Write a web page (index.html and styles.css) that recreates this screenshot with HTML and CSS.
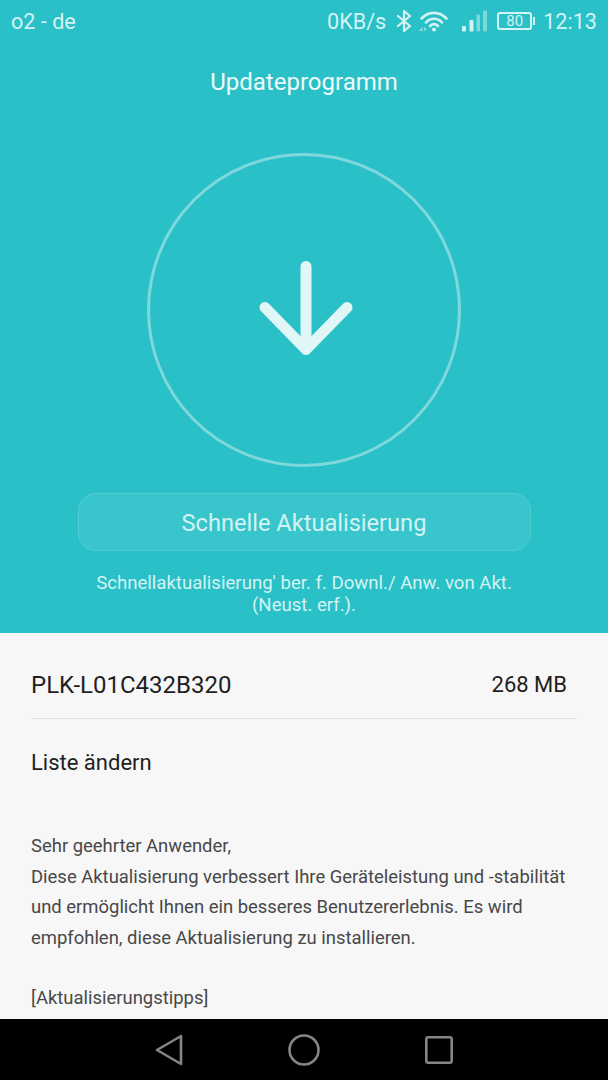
FILE: index.html
```html
<!DOCTYPE html>
<html lang="de">
<head>
    <meta charset="UTF-8">
    <meta name="viewport" content="width=device-width, initial-scale=1.0">
    <title>Updateprogramm</title>
    <link rel="stylesheet" href="styles.css">
</head>
<body>
    <div class="screen">
        <header class="hero">
            <div class="status-bar">
                <span class="carrier">o2 - de</span>
                <div class="status-right">
                    <span class="speed">0KB/s</span>
                    <svg class="icon-bt" width="16" height="22" viewBox="0 0 16 22">
                        <path d="M2 6 L14 16 L8 21 V1 L14 6 L2 16" fill="none" stroke="#d4f3f3" stroke-width="2.2" stroke-linejoin="round" stroke-linecap="round"/>
                    </svg>
                    <svg class="icon-wifi" width="30" height="22" viewBox="0 0 30 22">
                        <path d="M2.500 8.500 C9.500 1 20.500 1 27.500 8.500" fill="none" stroke="#d4f3f3" stroke-width="2.600" stroke-linecap="round"/>
                        <path d="M7 12.500 C11.500 7.500 18.500 7.500 23 12.500" fill="none" stroke="#d4f3f3" stroke-width="2.600" stroke-linecap="round"/>
                        <path d="M11 16 C13.500 13.600 16.500 13.600 19 16" fill="none" stroke="#d4f3f3" stroke-width="2.600" stroke-linecap="round"/>
                        <circle cx="15" cy="19.500" r="2" fill="#d4f3f3"/>
                        <path d="M3.500 17 V21 L0 21 Z" fill="#8fdcdd"/>
                        <path d="M5 17 V21 L8 19 Z" fill="#8fdcdd"/>
                    </svg>
                    <svg class="icon-signal" width="25" height="22" viewBox="0 0 25 22">
                        <rect x="0" y="16" width="4" height="5.500" rx="1" fill="#d4f3f3"/>
                        <rect x="7.500" y="10" width="4" height="11.500" rx="1" fill="#d4f3f3"/>
                        <rect x="14.500" y="4.500" width="3.500" height="17" rx="1" fill="#7fd7d9"/>
                        <rect x="21" y="0.500" width="4" height="21" rx="1" fill="#7fd7d9"/>
                    </svg>
                    <span class="battery"><span class="battery-level">80</span></span>
                    <span class="clock">12:13</span>
                </div>
            </div>
            <h1 class="title">Updateprogramm</h1>
            <div class="ring">
                <svg class="arrow" width="96" height="98" viewBox="0 0 96 98">
                    <path d="M48 5.500 V88.500 M7 46.500 L48 88.500 L89 46.500" fill="none" stroke="#e0f6f7" stroke-width="11" stroke-linecap="round" stroke-linejoin="round"/>
                </svg>
            </div>
            <button class="quick-btn">Schnelle Aktualisierung</button>
            <p class="hint">Schnellaktualisierung' ber. f. Downl./ Anw. von Akt.<br>(Neust. erf.).</p>
        </header>

        <main class="details">
            <div class="version-row">
                <span>PLK-L01C432B320</span>
                <span class="size">268 MB</span>
            </div>
            <h2 class="changes-title">Liste ändern</h2>
            <div class="changes-text">
                <p>Sehr geehrter Anwender,<br>Diese Aktualisierung verbessert Ihre Geräteleistung und -stabilität und ermöglicht Ihnen ein besseres Benutzererlebnis. Es wird empfohlen, diese Aktualisierung zu installieren.</p>
                <p>[Aktualisierungstipps]</p>
            </div>
        </main>

        <nav class="nav-bar">
            <svg width="30" height="32" viewBox="0 0 30 32">
                <path d="M27 2 V30 L3 16 Z" fill="none" stroke="#858585" stroke-width="2.600" stroke-linejoin="round"/>
            </svg>
            <svg width="32" height="32" viewBox="0 0 32 32">
                <circle cx="16" cy="16" r="14.500" fill="none" stroke="#858585" stroke-width="2.600"/>
            </svg>
            <svg width="30" height="30" viewBox="0 0 30 30">
                <rect x="2.300" y="2.300" width="25.400" height="25.400" rx="2" fill="none" stroke="#858585" stroke-width="2.600"/>
            </svg>
        </nav>
    </div>
</body>
</html>
```

FILE: styles.css
```css
* {
    box-sizing: border-box;
}

html, body {
    margin: 0;
    padding: 0;
}

body {
    font-family: Roboto, "Noto Sans", sans-serif;
    background-color: #000;
}

.screen {
    width: 608px;
    height: 1080px;
    display: flex;
    flex-direction: column;
    overflow: hidden;
}

/* Top teal part */
.hero {
    height: 633px;
    flex-shrink: 0;
    background-color: #29c0c7;
    display: flex;
    flex-direction: column;
    align-items: center;
    color: #d4f3f3;
}

.status-bar {
    width: 100%;
    height: 42px;
    padding: 0 11px;
    display: flex;
    align-items: center;
    justify-content: space-between;
    font-size: 21.6px;
}

.status-right {
    display: flex;
    align-items: center;
}

.icon-bt {
    margin-left: 10px;
}

.icon-wifi {
    margin-left: 7px;
}

.icon-signal {
    margin-left: 13px;
}

.battery {
    position: relative;
    width: 35px;
    height: 18px;
    margin-left: 10px;
    border: 2px solid #d4f3f3;
    border-radius: 3px;
    display: flex;
    align-items: center;
    justify-content: center;
}

.battery::after {
    content: "";
    position: absolute;
    right: -5px;
    top: 3px;
    width: 2px;
    height: 8px;
    background-color: #d4f3f3;
}

.battery-level {
    font-size: 15px;
}

.clock {
    margin-left: 11px;
}

.title {
    margin: 25px 0 0;
    font-size: 24px;
    line-height: 30px;
    font-weight: 400;
    color: #eefafa;
}

.ring {
    width: 314px;
    height: 314px;
    margin-top: 56px;
    border: 3px solid #7ed8dc;
    border-radius: 50%;
    display: flex;
    align-items: center;
    justify-content: center;
}

.arrow {
    margin-left: 3px;
}

.quick-btn {
    width: 453px;
    height: 58px;
    margin-top: 26px;
    padding: 2px 0 0;
    background-color: #38c5cb;
    border: 1px solid #53cdd2;
    border-radius: 18px;
    color: #d4f3f3;
    font-family: inherit;
    font-size: 23.6px;
}

.hint {
    margin: 21px 0 0;
    font-size: 18.6px;
    line-height: 22px;
    text-align: center;
}

/* Lower white part */
.details {
    flex: 1;
    min-height: 0;
    overflow: hidden;
    padding: 0 31px;
    background-color: #f7f7f7;
    color: #1f1f1f;
}

.version-row {
    height: 86px;
    display: flex;
    align-items: center;
    justify-content: space-between;
    padding: 18px 10px 0 0;
    font-size: 24px;
    border-bottom: 1px solid #e2e2e2;
}

.size {
    font-size: 22px;
}

.changes-title {
    margin: 30px 0 0;
    font-size: 22px;
    line-height: 28px;
    font-weight: 400;
}

.changes-text {
    margin-top: 54px;
    font-size: 18.45px;
    line-height: 30.500px;
    color: #484848;
}

.changes-text p {
    margin: 0 0 30px;
}

.nav-bar {
    height: 61px;
    flex-shrink: 0;
    background-color: #000;
    display: flex;
    align-items: center;
    justify-content: center;
    gap: 104px;
}
```
